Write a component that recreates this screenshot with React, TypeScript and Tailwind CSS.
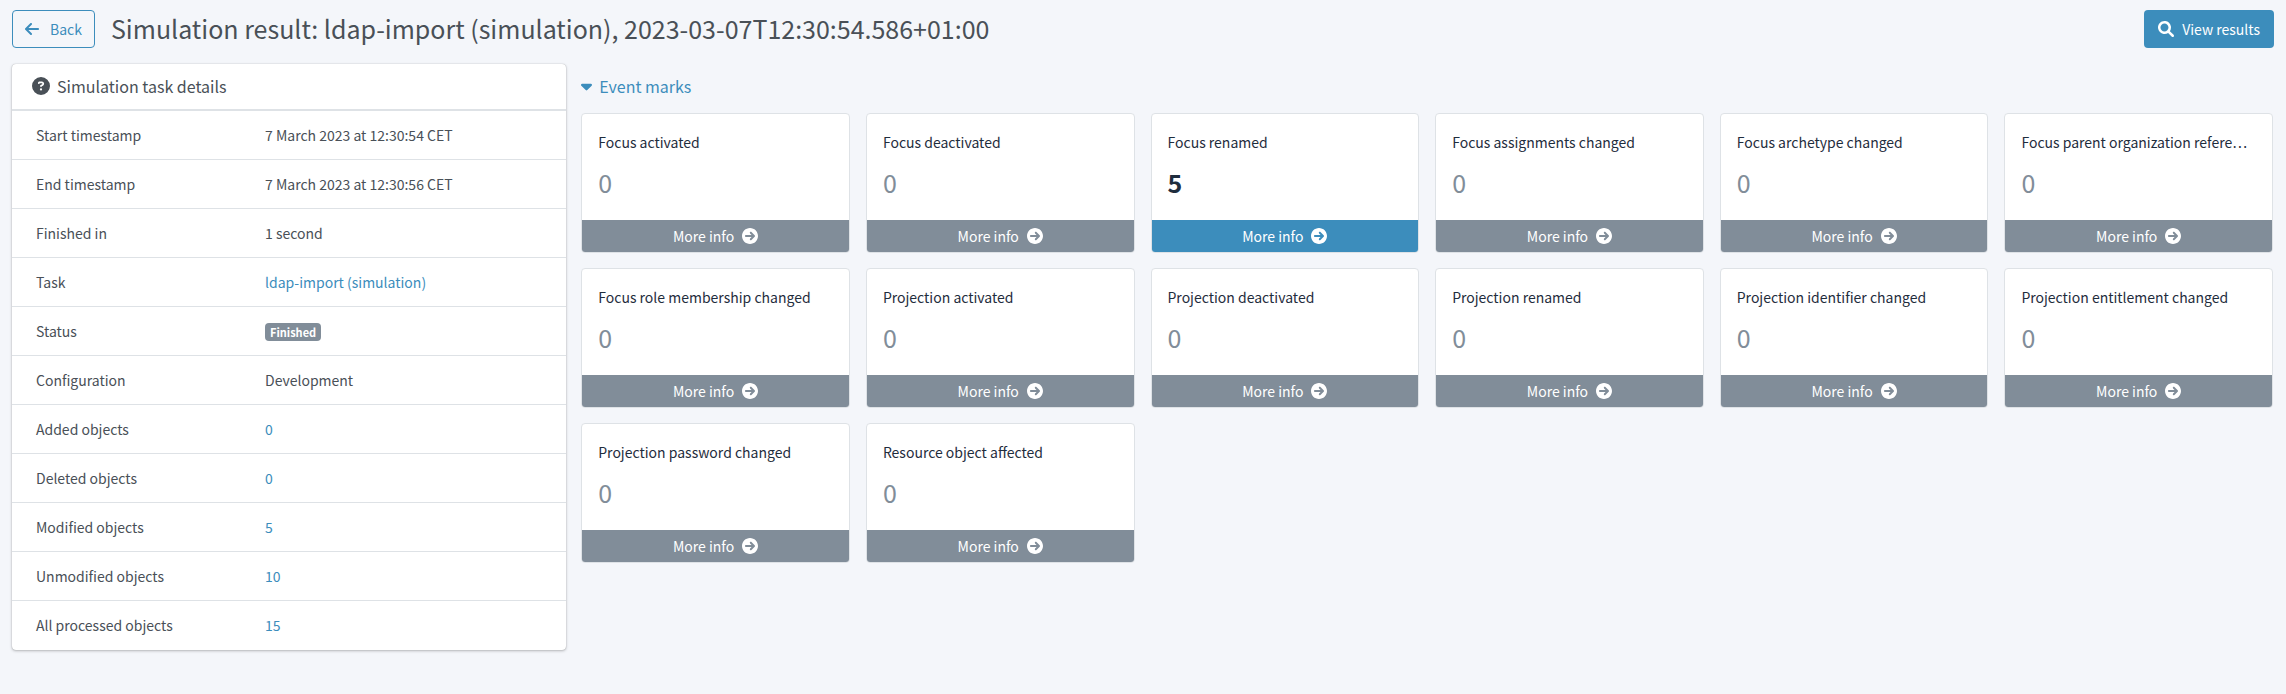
import React from "react";
import { FaArrowLeft, FaCaretDown, FaCircleQuestion } from "react-icons/fa6";

type Detail = { label: string; value: string; kind?: "link" | "badge" };
type Mark = { title: string; count: number };

const details: Detail[] = [
  { label: "Start timestamp", value: "7 March 2023 at 12:30:54 CET" },
  { label: "End timestamp", value: "7 March 2023 at 12:30:56 CET" },
  { label: "Finished in", value: "1 second" },
  { label: "Task", value: "ldap-import (simulation)", kind: "link" },
  { label: "Status", value: "Finished", kind: "badge" },
  { label: "Configuration", value: "Development" },
  { label: "Added objects", value: "0", kind: "link" },
  { label: "Deleted objects", value: "0", kind: "link" },
  { label: "Modified objects", value: "5", kind: "link" },
  { label: "Unmodified objects", value: "10", kind: "link" },
  { label: "All processed objects", value: "15", kind: "link" },
];

const marks: Mark[] = [
  { title: "Focus activated", count: 0 },
  { title: "Focus deactivated", count: 0 },
  { title: "Focus renamed", count: 5 },
  { title: "Focus assignments changed", count: 0 },
  { title: "Focus archetype changed", count: 0 },
  { title: "Focus parent organization refere…", count: 0 },
  { title: "Focus role membership changed", count: 0 },
  { title: "Projection activated", count: 0 },
  { title: "Projection deactivated", count: 0 },
  { title: "Projection renamed", count: 0 },
  { title: "Projection identifier changed", count: 0 },
  { title: "Projection entitlement changed", count: 0 },
  { title: "Projection password changed", count: 0 },
  { title: "Resource object affected", count: 0 },
];

function SearchIcon() {
  return (
    <svg viewBox="0 0 512 512" className="size-4" fill="currentColor" aria-hidden="true">
      <path d="M500.3 443.7l-119.7-119.7c27.22-40.41 40.65-90.9 33.46-144.7C401.8 87.79 326.8 13.32 235.2 1.723C99.01-15.51-15.51 99.01 1.724 235.2c11.6 91.64 86.08 166.7 177.6 178.9c53.8 7.189 104.3-6.236 144.7-33.46l119.7 119.7c15.62 15.62 40.95 15.62 56.57 0C515.9 484.7 515.9 459.3 500.3 443.7zM79.1 208c0-70.58 57.42-128 128-128s128 57.42 128 128c0 70.58-57.42 128-128 128S79.1 278.6 79.1 208z" />
    </svg>
  );
}

function CircleArrowIcon() {
  return (
    <svg viewBox="0 0 512 512" className="size-4" fill="currentColor" aria-hidden="true">
      <path d="M256 0C114.6 0 0 114.6 0 256c0 141.4 114.6 256 256 256s256-114.6 256-256C512 114.6 397.4 0 256 0zM406.6 278.6l-103.1 103.1c-12.5 12.5-32.75 12.5-45.25 0s-12.5-32.75 0-45.25L306.8 288H128C110.3 288 96 273.7 96 256s14.31-32 32-32h178.8l-49.38-49.38c-12.5-12.5-12.5-32.75 0-45.25s32.75-12.5 45.25 0l103.1 103.1C414.6 241.3 416 251.1 416 256C416 260.9 414.6 270.7 406.6 278.6z" />
    </svg>
  );
}

function DetailValue({ value, kind }: Detail) {
  if (kind === "link") {
    return (
      <a href="#" className="text-[#3c8dbc]">
        {value}
      </a>
    );
  }
  if (kind === "badge") {
    return (
      <span className="inline-block rounded bg-[#818d99] px-[5px] text-[11px] leading-[18px] font-bold text-white">
        {value}
      </span>
    );
  }
  return <>{value}</>;
}

function MarkCard({ title, count }: Mark) {
  const active = count > 0;
  return (
    <article className="min-w-0 overflow-hidden rounded border border-[#dee2e6] bg-white">
      <div className="px-4 pt-4 pb-[22px]">
        <h3 className="truncate leading-6 text-[#1f2d3d]">{title}</h3>
        <p
          className={
            active
              ? "mt-3 text-[25px] leading-8 font-bold text-[#1f2d3d]"
              : "mt-3 text-[25px] leading-8 text-[#818d99]"
          }
        >
          {count}
        </p>
      </div>
      <a
        href="#"
        className={
          active
            ? "flex h-8 items-center justify-center gap-2 bg-[#3c8dbc] text-white"
            : "flex h-8 items-center justify-center gap-2 bg-[#818d99] text-white"
        }
      >
        More info
        <CircleArrowIcon />
      </a>
    </article>
  );
}

export default function App() {
  return (
    <div
      lang="en"
      className="min-h-screen bg-[#f4f6fa] px-3 pt-[10px] pb-6 font-['Noto_Sans_CJK_KR',sans-serif] text-[14px] leading-6 text-[#495057]"
    >
      <header className="flex items-center">
        <button
          type="button"
          className="flex h-[38px] items-center gap-[11px] rounded border border-[#3c8dbc] px-3 text-[#3c8dbc]"
        >
          <FaArrowLeft className="h-4 w-[14px]" />
          Back
        </button>
        <h1 className="ml-4 flex-1 truncate pb-0.5 text-[25px] leading-9">
          Simulation result: ldap-import (simulation), 2023-03-07T12:30:54.586+01:00
        </h1>
        <button
          type="button"
          className="flex h-[38px] items-center gap-2 rounded bg-[#3c8dbc] px-[14px] text-white"
        >
          <SearchIcon />
          View results
        </button>
      </header>

      <main className="mt-4 grid grid-cols-12 items-start gap-[15px]">
        <section className="col-span-3 overflow-hidden rounded bg-white shadow-[0_0_1px_rgba(0,0,0,0.3),0_1px_3px_rgba(0,0,0,0.25)]">
          <h2 className="flex h-[46px] items-center gap-[7px] border-b border-[#dee2e6] px-5 pb-0.5 text-[16px]">
            <FaCircleQuestion className="size-[18px]" />
            Simulation task details
          </h2>
          <table className="w-full table-fixed">
            <tbody>
              {details.map((d) => (
                <tr key={d.label} className="h-[49px] border-t border-[#dee2e6]">
                  <th scope="row" className="w-[241px] pl-6 text-left font-normal">
                    {d.label}
                  </th>
                  <td className="pl-3">
                    <DetailValue {...d} />
                  </td>
                </tr>
              ))}
            </tbody>
          </table>
        </section>

        <section className="col-span-9 pt-[10px] pr-px">
          <button
            type="button"
            aria-expanded="true"
            className="flex items-center gap-[7px] text-[16px] leading-6 text-[#3c8dbc]"
          >
            <FaCaretDown className="h-[18px] w-[11px]" />
            Event marks
          </button>
          <div className="mt-[15px] grid grid-cols-6 gap-x-4 gap-y-[15px]">
            {marks.map((m) => (
              <MarkCard key={m.title} {...m} />
            ))}
          </div>
        </section>
      </main>
    </div>
  );
}
